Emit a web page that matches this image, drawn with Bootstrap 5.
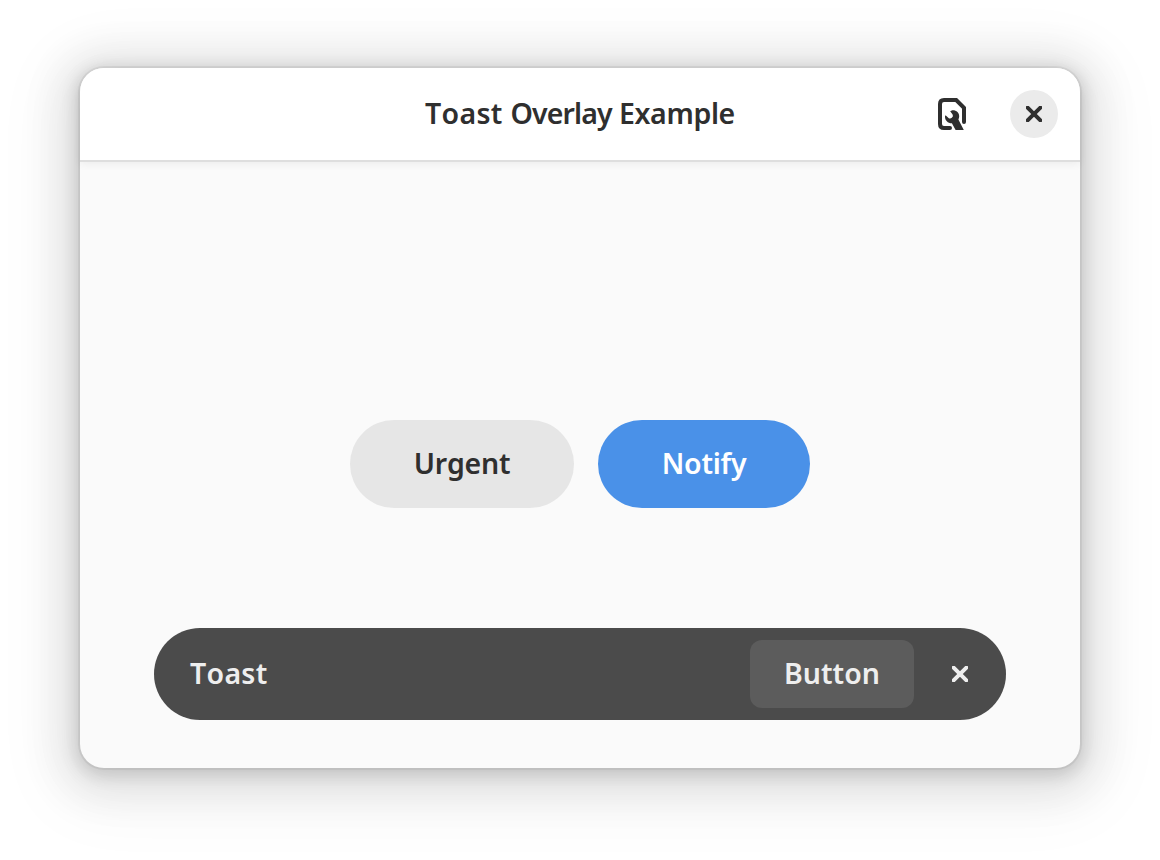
<!DOCTYPE html>
<html lang="en">
<head>
<meta charset="utf-8">
<meta name="viewport" content="width=device-width, initial-scale=1">
<title>Toast Overlay Example</title>
<link href="https://cdn.jsdelivr.net/npm/bootstrap@5.3.0/dist/css/bootstrap.min.css" rel="stylesheet">
<style>
  body { background: #fff; font-family: "Noto Sans", "Open Sans", sans-serif; font-size: 28.5px; line-height: 38px; color: #2f2f2f; height: 860px; overflow: hidden; padding: 68px 80px 92px; }
  .app-window { height: 700px; border-radius: 24px; background: #fafafa; box-shadow: 0 4px 16px 4px rgba(0,0,0,.13), 0 6px 40px 20px rgba(0,0,0,.09), 0 12px 64px 32px rgba(0,0,0,.04), 0 0 0 2px rgba(0,0,0,.05); }
  .app-header { height: 92px; flex: none; background: #fff; border-radius: 24px 24px 0 0; box-shadow: 0 2px #dedede, 0 4px 8px rgba(0,0,0,.06); display: grid; grid-template-columns: 1fr auto 1fr; padding: 0 22px; }
  .semi { font-weight: 600; font-kerning: none; white-space: nowrap; }
  .app-title { font-size: inherit; line-height: 38px; letter-spacing: -.35px; padding-bottom: 2px; }
  .title-loose { letter-spacing: .3px; }
  .title-tight { letter-spacing: -.85px; }
  .round-btn { width: 48px; height: 48px; background: #ebebeb; }
  .app-header .btn, .toast-bar .btn { border: 0; padding: 0; }
  .header-tools { gap: 42px; }
  .pill { height: 88px; border: 0; font-size: inherit; padding: 0 0 2px; line-height: 38px; letter-spacing: -.25px; }
  .pill-urgent { width: 224px; background: #e6e6e6; color: #2f2f2f; }
  .pill-notify { width: 212px; background: #4a91e8; color: #fff; }
  .choices { gap: 24px; padding-top: 260px; }
  .toast-bar { height: 92px; margin: 0 74px 48px; padding: 0 12px 0 36px; background: #4b4b4b; color: #eee; }
  .toast-label { padding-bottom: 2px; letter-spacing: .3px; }
  .toast-bar .toast-action { width: 164px; height: 68px; padding-bottom: 2px; border-radius: 12px; background: #5c5c5c; color: #eee; font-size: inherit; line-height: 38px; }
  .toast-close { width: 68px; height: 68px; margin-left: 12px; color: #eee; }
  svg { display: block; }
</style>
</head>
<body>
<main class="app-window d-flex flex-column">
  <header class="app-header align-items-center">
    <span></span>
    <h1 class="app-title semi mb-0"><span class="title-loose">Toast </span><span class="title-tight">Overlay</span> Example</h1>
    <div class="header-tools d-flex justify-content-end align-items-center">
      <button class="btn" type="button" aria-label="Inspect">
        <svg width="32" height="32" viewBox="0 0 32 32" fill="none" stroke="#2f2f2f" stroke-width="4" stroke-linecap="round">
          <path d="M14 30H8Q4 30 4 26V6Q4 2 8 2H20.2L28 9.8V24"/>
          <path d="M16.3 12.2C20.4 12 23.4 14.8 23.2 18.6Q23.1 20.2 22.4 21.6L27.8 32H19.6L15.9 25.2C11.8 25.2 8.8 22.5 9 18.2L9.6 17.2L12.8 20.2Q14.3 21.2 15.8 19.8Q17.7 18.2 16.6 16.4L14.2 13.3Z" fill="#2f2f2f" stroke="none"/>
        </svg>
      </button>
      <button class="btn round-btn rounded-circle d-flex align-items-center justify-content-center" type="button" aria-label="Close">
        <svg width="16" height="16" viewBox="0 0 16 16" stroke="#2f2f2f" stroke-width="4" stroke-linecap="round"><path d="M1.6 1.6L14.4 14.4M14.4 1.6L1.6 14.4"/></svg>
      </button>
    </div>
  </header>
  <section class="choices d-flex justify-content-center flex-grow-1 align-items-start">
    <button class="btn pill pill-urgent rounded-pill semi" type="button">Urgent</button>
    <button class="btn pill pill-notify rounded-pill semi" type="button">Notify</button>
  </section>
  <div class="toast-bar rounded-pill d-flex align-items-center" role="status">
    <span class="toast-label semi me-auto">Toast</span>
    <button class="btn toast-action semi" type="button">Button</button>
    <button class="btn toast-close d-flex align-items-center justify-content-center" type="button" aria-label="Dismiss">
      <svg width="16" height="16" viewBox="0 0 16 16" stroke="currentColor" stroke-width="4" stroke-linecap="round"><path d="M1.6 1.6L14.4 14.4M14.4 1.6L1.6 14.4"/></svg>
    </button>
  </div>
</main>
<script src="https://cdn.jsdelivr.net/npm/bootstrap@5.3.0/dist/js/bootstrap.bundle.min.js"></script>
</body>
</html>
